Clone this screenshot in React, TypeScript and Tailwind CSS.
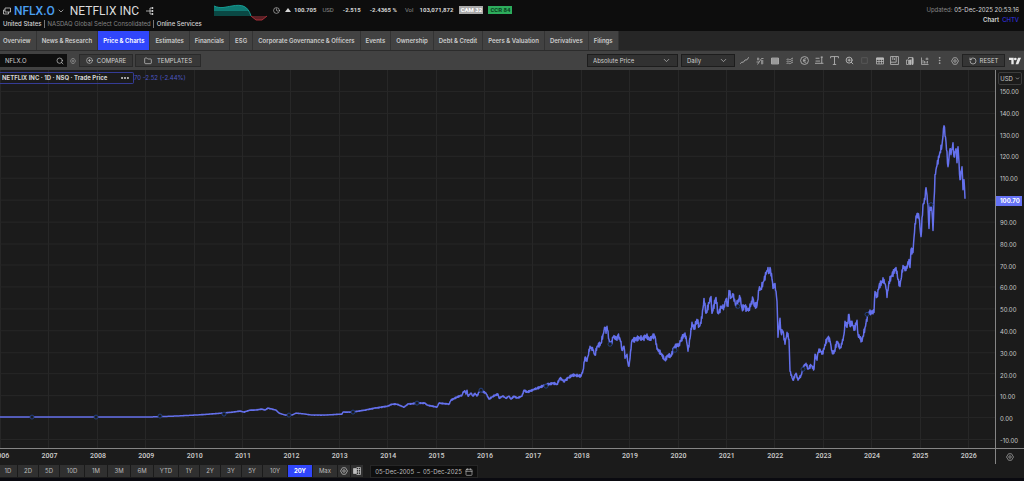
import React, { useState } from "react";
import {
  Search,
  CirclePlus,
  Folder,
  ChevronDown,
  RotateCcw,
  Clock,
  Calendar,
  Ellipsis,
  EllipsisVertical,
  ZoomIn,
} from "lucide-react";

const tabs = [
  "Overview",
  "News & Research",
  "Price & Charts",
  "Estimates",
  "Financials",
  "ESG",
  "Corporate Governance & Officers",
  "Events",
  "Ownership",
  "Debt & Credit",
  "Peers & Valuation",
  "Derivatives",
  "Filings",
];

const ranges = ["1D", "2D", "5D", "10D", "1M", "3M", "6M", "YTD", "1Y", "2Y", "3Y", "5Y", "10Y", "20Y", "Max"];

const years = Array.from({ length: 21 }, (_, i) => 2006 + i);
const prices = Array.from({ length: 17 }, (_, i) => 150 - i * 10);

// the plot's view box is 995 x 379 and starts at y = 70
const line: [number, number][] = [
  [0, 418], [60, 418], [100, 418], [146, 418], [175, 417], [195, 416], [210, 415], [222, 414], [233, 413], [240, 412],
  [244, 413], [250, 411], [255, 411], [262, 410], [265, 411], [268, 409], [272, 410], [276, 411], [279, 414], [285, 416],
  [292, 416], [296, 414], [305, 415], [312, 416], [325, 416], [342, 415], [343, 413], [352, 413], [365, 411], [375, 409],
  [388, 407], [392, 405], [397, 405], [401, 407], [404, 408], [408, 405], [417, 404], [425, 404], [427, 406], [437, 408],
  [439, 404], [449, 405], [451, 401], [457, 398], [462, 396], [463, 393], [465, 392], [466, 395], [467, 391], [468, 397],
  [471, 394], [473, 397], [475, 394], [477, 397], [480, 391], [486, 394], [489, 400], [493, 397], [498, 395], [499, 399],
  [503, 397], [506, 399], [509, 397], [511, 400], [514, 397], [517, 399], [522, 397], [524, 391], [527, 393], [535, 390],
  [545, 386], [553, 384], [557, 385], [560, 379], [564, 382], [568, 379], [572, 376], [576, 376], [581, 377], [583, 371],
  [585, 358], [587, 362], [590, 347], [593, 351], [595, 356], [597, 347], [601, 344], [603, 335], [605, 328], [606, 334],
  [607, 327], [609, 340], [611, 346], [613, 338], [615, 337], [617, 341], [618, 336], [621, 342], [622, 351], [624, 347],
  [625, 359], [627, 355], [628, 364], [629, 367], [631, 350], [632, 341], [636, 340], [640, 338], [643, 340], [646, 336],
  [650, 341], [652, 337], [655, 337], [657, 350], [661, 354], [665, 361], [668, 356], [671, 357], [674, 348], [679, 345],
  [684, 335], [686, 337], [688, 352], [690, 339], [692, 323], [694, 330], [697, 320], [699, 327], [701, 324], [703, 309],
  [704, 299], [706, 314], [709, 304], [711, 297], [712, 314], [716, 298], [718, 314], [721, 309], [724, 307], [726, 300],
  [728, 307], [729, 291], [731, 298], [733, 296], [736, 306], [740, 298], [742, 309], [745, 307], [747, 311], [749, 309],
  [751, 305], [753, 299], [754, 306], [757, 306], [759, 290], [761, 289], [763, 283], [766, 275], [768, 268], [769, 274],
  [770, 268], [772, 280], [773, 289], [775, 284], [777, 302], [778, 338], [780, 319], [781, 333], [783, 332], [785, 345],
  [787, 333], [789, 340], [790, 372], [793, 381], [796, 374], [798, 381], [801, 376], [804, 367], [806, 364], [808, 370],
  [811, 366], [814, 370], [815, 355], [817, 361], [818, 353], [820, 350], [822, 355], [824, 350], [825, 345], [828, 338],
  [830, 342], [832, 352], [834, 354], [837, 342], [840, 349], [842, 345], [844, 335], [845, 322], [847, 328], [849, 315],
  [850, 327], [852, 322], [854, 331], [857, 321], [858, 335], [862, 342], [865, 328], [868, 315], [871, 312], [874, 313],
  [875, 292], [877, 297], [879, 287], [882, 282], [884, 280], [886, 289], [887, 298], [889, 282], [892, 276], [896, 268],
  [898, 280], [900, 287], [903, 266], [906, 271], [909, 260], [910, 268], [911, 250], [913, 253], [914, 238], [915, 224],
  [917, 214], [919, 218], [921, 237], [923, 205], [925, 200], [926, 188], [928, 205], [929, 229], [930, 204], [932, 212],
  [933, 231], [935, 175], [937, 166], [940, 152], [942, 145], [944, 126], [946, 142], [948, 167], [950, 149], [951, 155],
  [953, 143], [954, 157], [956, 149], [957, 163], [958, 147], [960, 180], [962, 167], [963, 190], [964, 180], [965, 199],
];

const events = [
  [32, 418], [96, 418], [160, 417], [224, 415], [289, 416], [353, 413], [417, 404], [481, 391], [546, 387],
  [610, 345], [675, 351], [738, 307], [803, 370], [867, 315], [931, 205],
];

// adds the day to day wobble between the main points, larger at higher prices
function buildPath() {
  let d = `M${line[0][0]} ${line[0][1]}`;
  for (let i = 1; i < line.length; i++) {
    const [x0, y0] = line[i - 1];
    const [x1, y1] = line[i];
    const steps = (x1 - x0) * 2;
    const amp = Math.min(3, (418 - y1) / 32);
    for (let s = 1; s < steps; s++) {
      const x = x0 + s / 2;
      const wobble = Math.sin(x * 5.3) * amp;
      d += ` L${x} ${(y0 + ((y1 - y0) * s) / steps + wobble).toFixed(1)}`;
    }
    d += ` L${x1} ${y1}`;
  }
  return d;
}

const path = buildPath();

const iconProps = {
  viewBox: "0 0 16 16",
  fill: "none",
  stroke: "currentColor",
  strokeWidth: 1.5,
  className: "size-[9px]",
  "aria-hidden": true,
};

function HexGear({ className = "size-[9px]" }: { className?: string }) {
  return (
    <svg {...iconProps} className={className}>
      <path d="M5 1.5h6L15 8l-4 6.500H5L1 8z" />
      <circle cx="8" cy="8" r="2.500" />
    </svg>
  );
}

const tools: { name: string; icon: React.ReactNode; dim?: boolean }[] = [
  { name: "Chart type", icon: <svg {...iconProps}><path d="M0 14l3-3h3l3-4h3l4-5" /></svg> },
  { name: "Indicators", icon: <svg {...iconProps} className="size-[8px]"><path d="M3 15L11 3h4M2 4h5M4 1v6M10 8h5M10 12h5M12 6v9M1 10h5" /></svg> },
  { name: "Table", icon: <svg {...iconProps} className="size-[8px]"><path d="M1 2h14v12H1z" fill="currentColor" fillOpacity=".6" /><path d="M1 6h14M1 10h14" /></svg> },
  { name: "Patterns", icon: <svg {...iconProps} className="size-[8px]"><path d="M1 6c3-5 6 2 9-2l4-2M1 10c3-5 6 2 9-2l4-2M1 14c3-5 6 2 9-2l4-2" /></svg> },
  { name: "Events", icon: <svg {...iconProps}><circle cx="8" cy="8" r="7" /><path d="M11 5H9a3 3 0 0 0 0 6h2M6 8h4" /></svg> },
  { name: "Levels", icon: <svg {...iconProps}><path d="M1 4h7M0 13h15M1 9h8M12 1v12M10 2h4" /></svg> },
  { name: "Text", icon: <svg {...iconProps}><path d="M1 4V1h14v3M8 1v14M5 15h6" /></svg> },
  { name: "Zoom in", icon: <ZoomIn className="size-[9px]" strokeWidth={2.5} /> },
  { name: "Zoom out", icon: <svg {...iconProps}><path d="M3 3h10v10H3z" /></svg>, dim: true },
  { name: "Data grid", icon: <svg {...iconProps} className="size-[8px]"><path d="M1 2h14v12H1zM1 9h14M6 2v12M11 2v12" /><path d="M1 2h14v3H1z" fill="currentColor" /></svg> },
  { name: "Layout", icon: <svg {...iconProps}><path d="M1 1h14v14H1zM1 11h10V1M5 1v6M8 4v3" /></svg> },
  { name: "Copy chart", icon: <svg {...iconProps} className="size-[8px]"><path d="M5 4V1h9v12M1 6h4v9H1z" /><path d="M7 6h3v9H7zM12 3h2v12h-2z" fill="currentColor" /></svg> },
  { name: "Add study", icon: <svg {...iconProps} className="size-[8px]"><path d="M1 1v14h14M4 13V6M7 13V8M10 13V9M13 13V8M12 1v5M9 4h6" /></svg> },
  { name: "More", icon: <EllipsisVertical className="size-[9px]" strokeWidth={2} /> },
  { name: "Chart settings", icon: <HexGear className="size-[8px]" /> },
];

function PickList({ label, width, options }: { label: string; width: string; options: string[] }) {
  return (
    <div className={`relative h-[13px] ${width}`}>
      <select
        aria-label={label}
        className="size-full appearance-none border border-[#1d1d1d] bg-[#313131] pl-[5px] text-[6px] leading-[11px] text-[#d0d0d0]"
      >
        {options.map((o) => (
          <option key={o}>{o}</option>
        ))}
      </select>
      <ChevronDown className="pointer-events-none absolute top-[2px] right-[7px] size-[9px] text-[#b5b5b5]" />
    </div>
  );
}

function Header() {
  return (
    <header className="flex h-[31px] items-start justify-between bg-[#0d0d0d] text-[6px] leading-[8px] text-[#d6d6d6]">
      <div className="flex">
        <div className="w-[213px] pl-[3px]">
          <div className="flex h-[20px] items-center pt-[2px] font-['Roboto','Liberation_Sans',sans-serif]">
            <svg {...iconProps} className="size-[8px]">
              <path d="M4 2h11v8H4zM4 6H1v8h10v-4" />
            </svg>
            <span className="ml-[3px] text-[12px] font-medium leading-[16px] text-[#4a9ff0]">NFLX.O</span>
            <ChevronDown className="ml-[2px] size-[8px]" />
            <h1 className="ml-[5px] text-[12px] leading-[16px] text-[#dcdcdc]">NETFLIX INC</h1>
            <svg {...iconProps} className="ml-[7px] size-[8px]">
              <path d="M0 8h8M14 2H8v12h6M8 8h6" />
              <path d="M12 1h2v2h-2zM12 7h2v2h-2zM12 13h2v2h-2z" fill="currentColor" />
            </svg>
          </div>
          <p className="flex whitespace-nowrap">
            <span className="font-medium">United States</span>
            <span className="mx-[3px] border-x border-[#777] px-[2px] text-[#858585]">
              NASDAQ Global Select Consolidated
            </span>
            <span className="font-medium">Online Services</span>
          </p>
        </div>
        <svg viewBox="0 0 56 20" className="mt-[2px] h-[20px] w-[56px]" aria-hidden="true">
          <path d="M1 4C8 7 12 5 19 4C29 2 35 4 38 14H1z" fill="#0a4844" />
          <path d="M1 4C8 7 12 5 19 4C29 2 33 4 36 9H1z" fill="#0f7a73" />
          <path d="M1 4C8 7 12 5 19 4C29 2 35 4 38 14" fill="none" stroke="#159a92" />
          <path d="M38 14h16L49 18h-6z" fill="#5a2025" />
          <path d="M38 14L43 18h6L54 14" fill="none" stroke="#a8303a" />
        </svg>
        <div className="flex h-[20px] items-center font-['Roboto','Liberation_Sans',sans-serif] font-bold whitespace-nowrap">
          <Clock className="ml-[4px] size-[7px]" />
          <svg viewBox="0 0 6 4" className="ml-[5px] h-[4px] w-[6px]" fill="currentColor" aria-hidden="true">
            <path d="M0 4L3 0l3 4z" />
          </svg>
          <span className="ml-[3px]">100.705</span>
          <span className="ml-[6px] font-normal text-[#8b8b8b]">USD</span>
          <span className="ml-[9px]">-2.515</span>
          <span className="ml-[9px]">-2.4365 %</span>
          <span className="ml-[8px] font-normal text-[#8b8b8b]">Vol</span>
          <span className="ml-[6px]">103,071,872</span>
          <span className="ml-[6px] w-[24px] bg-[#a9a9a9] text-center text-white">CAM 32</span>
          <span className="ml-[5px] w-[24px] bg-[#2dac5c] text-center text-[#0b3d1e]">CCR 84</span>
        </div>
      </div>
      <div className="pt-[5px] pr-[5px] text-right leading-[10px]">
        <p className="text-[#858585]">
          Updated: <span className="text-[#d6d6d6]">05-Dec-2025 20:53:16</span>
        </p>
        <p className="flex justify-end gap-[3px] font-semibold">
          <span>Chart</span>
          <a href="#chtv" className="font-normal text-[#3434ee]">CHTV</a>
        </p>
      </div>
    </header>
  );
}

function Toolbar() {
  return (
    <div className="flex h-[19px] items-center bg-[#424242] text-[6px] text-[#d0d0d0]">
      <label className="flex h-[13px] w-[67px] items-center bg-[#0f0f0f] pr-[3px]">
        <input
          aria-label="Instrument"
          defaultValue="NFLX.O"
          className="w-full min-w-0 bg-transparent pl-[5px] leading-[11px] outline-none"
        />
        <Search className="size-[8px] shrink-0" />
      </label>
      <button aria-label="Search settings" className="ml-px flex w-[10px] justify-center text-[#a5a5a5]">
        <HexGear className="size-[6px]" />
      </button>
      <button className="ml-px flex h-[13px] w-[54px] items-center justify-center gap-[4px] border border-[#2a2a2a] bg-[#383838] leading-[11px]">
        <CirclePlus className="size-[7px]" /> COMPARE
      </button>
      <button className="ml-[2px] flex h-[13px] w-[66px] items-center justify-center gap-[5px] border border-[#2a2a2a] bg-[#383838] leading-[11px]">
        <Folder className="size-[8px]" /> TEMPLATES
      </button>
      <div className="ml-auto flex items-center">
        <PickList label="Price mode" width="w-[91px]" options={["Absolute Price", "Percentage"]} />
        <div className="w-[3px]" />
        <PickList label="Interval" width="w-[54px]" options={["Daily", "Weekly", "Monthly"]} />
        <div className="ml-[2px] flex text-[#b8b8b8]">
          {tools.map((t) => (
            <button
              key={t.name}
              aria-label={t.name}
              disabled={t.dim}
              className="flex h-[13px] w-[15px] items-center justify-center disabled:text-[#5a5a5a]"
            >
              {t.icon}
            </button>
          ))}
        </div>
        <button className="flex h-[13px] w-[43px] items-center justify-center gap-[3px] border border-[#222] bg-[#353535] leading-[11px]">
          <RotateCcw className="size-[8px]" /> RESET
        </button>
        <svg viewBox="0 0 36 22" className="mr-[3px] ml-[4px] h-[8px] w-[12px]" role="img" aria-label="TradingView">
          <path d="M0 1h14v20H7V8H0z" fill="#ececec" />
          <circle cx="19" cy="5" r="4" fill="#ececec" />
          <path d="M27 1h9l-8 20h-8z" fill="#ececec" />
        </svg>
      </div>
    </div>
  );
}

function Chart() {
  return (
    <main className="flex min-h-0 flex-1 flex-col bg-[#1b1b1b]">
      <div className="flex min-h-[379px] flex-1">
        <div className="relative min-w-0 flex-1 border-b border-[#858585]">
          <svg viewBox="0 70 995 379" preserveAspectRatio="none" className="absolute inset-0 size-full" role="img" aria-label="Netflix trade price">
            <g stroke="#272727">
              {years.map((y, i) => (
                <line key={y} x1={Math.round(i * 48.4) + 0.5} x2={Math.round(i * 48.4) + 0.5} y1="70" y2="449" />
              ))}
              {prices.map((p) => {
                const y = Math.round(418 - p * 2.18) + 0.5;
                return <line key={p} x1="0" x2="995" y1={y} y2={y} />;
              })}
            </g>
            <path d={path} fill="none" stroke="#6470ec" strokeWidth="1.5" strokeLinejoin="round" />
            {events.map(([x, y]) => (
              <circle key={x} cx={x} cy={y} r="2" fill="#1b1b1b" stroke="#233f80" />
            ))}
          </svg>
          <div className="absolute top-[2px] left-0 flex h-[12px] items-center text-[6px] leading-[10px] whitespace-nowrap">
            <div className="flex h-full w-[134px] items-center justify-between rounded-r-[2px] border border-l-0 border-[#353c96] pr-[3px] pl-[2px] font-bold text-[#d4d4d4]">
              NETFLIX INC · 1D · NSQ · Trade Price
              <button aria-label="Series options">
                <Ellipsis className="size-[10px]" strokeWidth={3} />
              </button>
            </div>
            <span className="text-[#4c56c4]">70 -2.52 (-2.44%)</span>
          </div>
        </div>
        <div className="flex w-[29px] flex-col border-b border-l border-[#858585] pb-[2px] text-[6px] leading-[10px] text-[#c9c9c9]">
          <button className="my-[2px] ml-[2px] flex h-[13px] w-[24px] items-center justify-center gap-[2px] rounded-[2px] border border-[#3c3c3c]">
            USD <ChevronDown className="size-[5px]" strokeWidth={3} />
          </button>
          <div className="flex flex-1 flex-col items-start justify-between">
            {prices.map((p) =>
              p === 100 ? (
                <span key={p} className="h-[10px] w-[26px] bg-[#6673f5] pl-[4px] font-bold text-white">100.70</span>
              ) : (
                <span key={p} className="pl-[4px]">{p.toFixed(2)}</span>
              )
            )}
          </div>
        </div>
      </div>
      <div className="flex h-[15px]">
        <div className="min-w-0 flex-1 overflow-hidden">
          <div className="-ml-[23px] flex pr-[2px] text-center font-['Roboto','Liberation_Sans',sans-serif] text-[7px] leading-[14px] font-medium text-[#cfcfcf]">
            {years.map((y) => (
              <span key={y} className="flex-1">{y}</span>
            ))}
          </div>
        </div>
        <button aria-label="Axis settings" className="flex w-[29px] items-center justify-center border-l border-[#858585] text-[#a5a5a5]">
          <HexGear className="size-[8px]" />
        </button>
      </div>
    </main>
  );
}

function rangeWidth(r: string) {
  if (r.length === 3) return "w-[24px]";
  return r.endsWith("M") ? "w-[22px]" : "w-[20px]";
}

export default function App() {
  const [tab, setTab] = useState("Price & Charts");
  const [range, setRange] = useState("20Y");

  return (
    <div className="flex min-h-screen flex-col bg-[#1b1b1b] font-['Inter','Liberation_Sans',sans-serif]">
      <Header />
      <nav className="flex h-[20px] border-b border-[#2c2c2c] bg-[#262626] text-[6px] font-semibold text-[#cdcdcd]">
        {tabs.map((t) => (
          <button
            key={t}
            onClick={() => setTab(t)}
            className={`border-r border-[#333] px-[5px] whitespace-nowrap first:pl-[3px] ${
              t === tab ? "bg-[#3046fb] text-white" : "bg-[#424242]"
            }`}
          >
            {t}
          </button>
        ))}
      </nav>
      <Toolbar />
      <Chart />
      <footer className="flex h-[17px] items-start border-b-3 border-[#0a0a10] pt-px text-[6px] text-[#bdbdbd]">
        <div className="-ml-[3px] flex gap-px">
          {ranges.map((r) => (
            <button
              key={r}
              onClick={() => setRange(r)}
              className={`h-[12px] leading-[12px] first:pl-[2px] ${rangeWidth(r)} ${
                r === range ? "bg-[#3046fb] font-bold text-white" : "bg-[#303030]"
              }`}
            >
              {r}
            </button>
          ))}
          <button aria-label="Range settings" className="flex h-[12px] w-[12px] items-center justify-center bg-[#303030]">
            <HexGear className="size-[8px]" />
          </button>
          <button aria-label="Table view" className="flex h-[12px] w-[12px] items-center justify-center bg-[#303030]">
            <svg {...iconProps} className="size-[8px]">
              <path d="M1 3h6v10H1z" fill="currentColor" />
              <path d="M7 1h8v14H7M7 5h8M7 10h8M11 1v14" />
            </svg>
          </button>
        </div>
        <button className="ml-[7px] flex h-[13px] w-[108px] items-center justify-center gap-[3px] border border-[#262626] bg-[#0e0e0e] leading-[11px] whitespace-nowrap">
          <span>05-Dec-2005</span>
          <span>–</span>
          <span>05-Dec-2025</span>
          <Calendar className="size-[8px] shrink-0" />
        </button>
      </footer>
    </div>
  );
}
